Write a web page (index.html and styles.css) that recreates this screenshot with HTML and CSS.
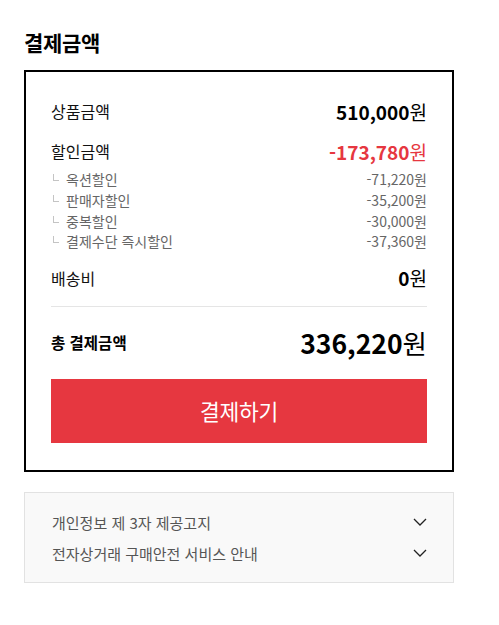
FILE: index.html
```html
<!DOCTYPE html>
<html lang="ko">
<head>
<meta charset="utf-8">
<link rel="stylesheet" href="styles.css">
</head>
<body>
<div class="page">
  <h2 class="title">결제금액</h2>
  <div class="box">
    <div class="row main">
      <span class="label">상품금액</span>
      <span class="value"><b>510,000</b>원</span>
    </div>
    <div class="row main discount">
      <span class="label">할인금액</span>
      <span class="value red"><b>-173,780</b>원</span>
    </div>
    <ul class="subs">
      <li class="sub"><span class="sl"><i class="corner"></i>옥션할인</span><span>-71,220원</span></li>
      <li class="sub"><span class="sl"><i class="corner"></i>판매자할인</span><span>-35,200원</span></li>
      <li class="sub"><span class="sl"><i class="corner"></i>중복할인</span><span>-30,000원</span></li>
      <li class="sub"><span class="sl"><i class="corner"></i>결제수단 즉시할인</span><span>-37,360원</span></li>
    </ul>
    <div class="row main ship">
      <span class="label">배송비</span>
      <span class="value"><b>0</b>원</span>
    </div>
    <div class="total">
      <span class="tlabel">총 결제금액</span>
      <span class="tvalue"><b>336,220</b>원</span>
    </div>
    <button class="pay">결제하기</button>
  </div>
  <div class="notice">
    <div class="nrow"><span>개인정보 제 3자 제공고지</span>
      <svg width="14" height="8" viewBox="0 0 14 8"><path d="M1 1 L7 7 L13 1" fill="none" stroke="#222" stroke-width="1.3"/></svg></div>
    <div class="nrow"><span>전자상거래 구매안전 서비스 안내</span>
      <svg width="14" height="8" viewBox="0 0 14 8"><path d="M1 1 L7 7 L13 1" fill="none" stroke="#222" stroke-width="1.3"/></svg></div>
  </div>
</div>
</body>
</html>
```
FILE: styles.css
```css
* { box-sizing: border-box; }
body {
  margin: 0;
  background: #fff;
  font-family: "Noto Sans CJK KR", "Noto Sans", sans-serif;
  color: #111;
}
.page { padding: 28px 45px 40px 24px; }
.title {
  margin: 0 0 13px;
  font-size: 21px;
  line-height: 29px;
  font-weight: 700;
  color: #000;
  letter-spacing: -0.3px;
}
.box {
  border: 2px solid #000;
  padding: 27px 25px 27px;
}
.row {
  display: flex;
  justify-content: space-between;
  align-items: center;
}
.main { height: 24px; }
.label { font-size: 16px; color: #111; }
.value { font-size: 19px; color: #000; }
.value b { font-weight: 700; }
.red { color: #e63740; }
.discount { margin-top: 16px; }
.subs {
  list-style: none;
  margin: 6px 0 0;
  padding: 0;
}
.sub {
  display: flex;
  justify-content: space-between;
  align-items: center;
  height: 20.7px;
  font-size: 14px;
  color: #666;
}
.sl { display: flex; align-items: center; }
.corner {
  display: inline-block;
  width: 6px;
  height: 7px;
  border-left: 1px solid #c4c4c4;
  border-bottom: 1px solid #c4c4c4;
  margin: 0 7px 3px 2px;
}
.ship { margin-top: 14px; }
.total {
  display: flex;
  justify-content: space-between;
  align-items: center;
  margin-top: 16px;
  border-top: 1px solid #e5e5e5;
  padding-top: 18px;
  height: 54px;
}
.tlabel { font-size: 15.5px; font-weight: 700; color: #000; }
.tvalue { font-size: 26.5px; color: #000; }
.tvalue b { font-weight: 700; }
.pay {
  display: block;
  width: 100%;
  height: 64px;
  margin-top: 19px;
  border: 0;
  background: #e63740;
  color: #fff;
  font-family: inherit;
  font-size: 21.5px;
  letter-spacing: -0.3px;
}
.notice {
  margin-top: 20px;
  background: #f9f9f9;
  border: 1px solid #e2e2e2;
  padding: 14px 26px 13px 27px;
}
.nrow {
  display: flex;
  justify-content: space-between;
  align-items: center;
  height: 31px;
  font-size: 15px;
  color: #555;
}
```
